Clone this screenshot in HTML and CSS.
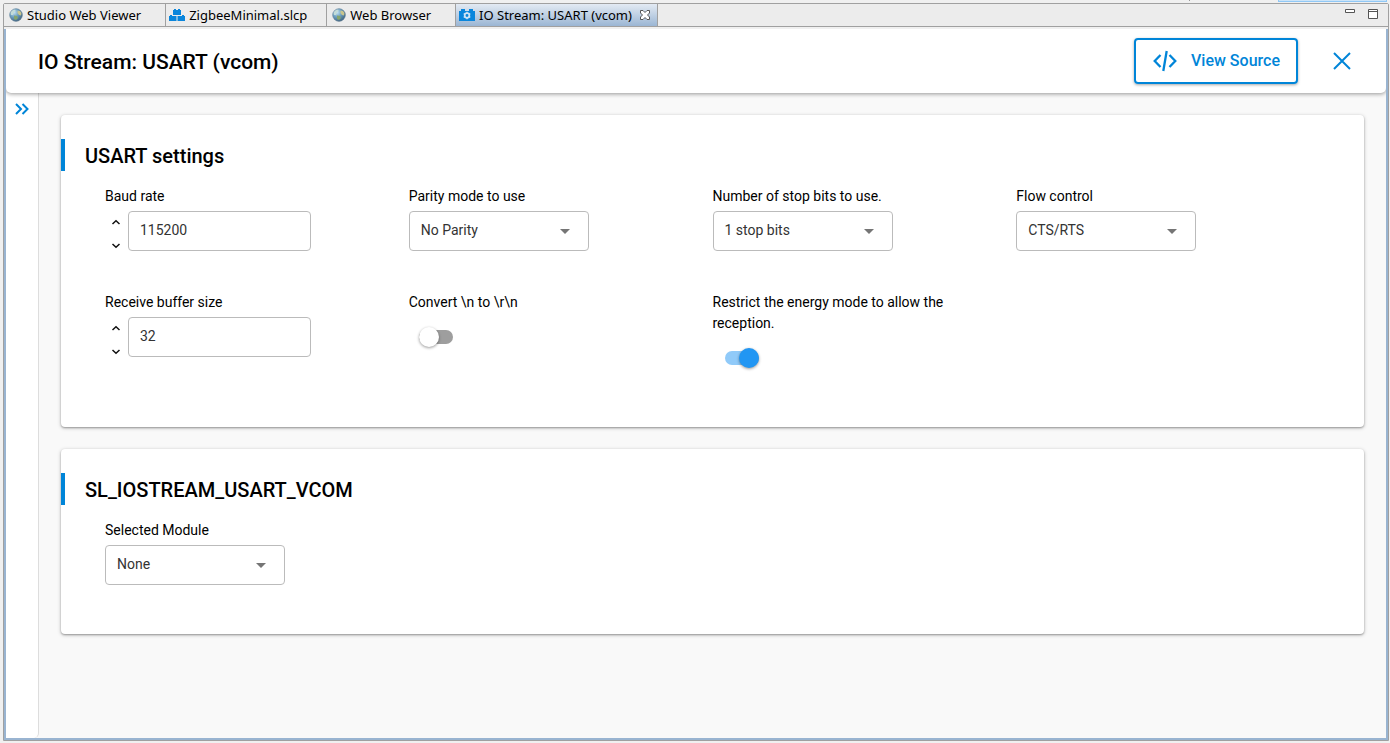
FILE: index.html
```html
<!DOCTYPE html>
<html lang="en">
<head>
<meta charset="utf-8">
<title>IO Stream: USART (vcom)</title>
<link rel="stylesheet" href="styles.css">
</head>
<body>
<svg class="defs" aria-hidden="true">
  <defs>
    <radialGradient id="sea" cx="35%" cy="30%" r="75%">
      <stop offset="0" stop-color="#c4e2f4"/>
      <stop offset="0.5" stop-color="#6a9dbd"/>
      <stop offset="1" stop-color="#3f617c"/>
    </radialGradient>
    <symbol id="globe" viewBox="0 0 14 14">
      <circle cx="7" cy="7" r="6.5" fill="url(#sea)"/>
      <path d="M1.500 5C2 3 4 1.500 6 1.500L6.500 3 5 4.500 4 7 2 7Z" fill="#c3dcd8"/>
      <path d="M8.500 2.500L11 3 12.500 5 12 7.500 10 7 8.500 5Z" fill="#c9c58c"/>
      <path d="M5 7.500L8 8 9 10 7 12 5 11Z" fill="#86a56c"/>
      <circle cx="7" cy="7" r="6.300" fill="none" stroke="#6b8397" stroke-width=".5"/>
    </symbol>
    <symbol id="up" viewBox="0 0 10 6"><path d="M1.500 5L5 1.700 8.500 5" fill="none" stroke="#111" stroke-width="1.500"/></symbol>
    <symbol id="down" viewBox="0 0 10 6"><path d="M1.500 1L5 4.300 8.500 1" fill="none" stroke="#111" stroke-width="1.500"/></symbol>
  </defs>
</svg>
<div class="desktop">
  <div class="toolbar-edge"><span class="edge-tick"></span><span class="edge-button"></span></div>
  <div class="window">
    <nav class="tabs" aria-label="Editors">
      <button class="tab" type="button"><svg class="tab-icon" width="14" height="14"><use href="#globe"/></svg>Studio Web Viewer</button>
      <button class="tab tab-project" type="button"><svg class="tab-icon" width="16" height="14" viewBox="0 0 16 14" fill="#0a86dc"><path d="M4 2h1V1h2v1h2V1h2v1h1v5H4zM0 8h1V7h2v1h4.500v5H0zM8.500 8H13V7h2v1h1v5H8.500z"/></svg>ZigbeeMinimal.slcp</button>
      <button class="tab" type="button"><svg class="tab-icon" width="14" height="14"><use href="#globe"/></svg>Web Browser</button>
      <div class="tab tab-active">
        <svg class="tab-icon" width="16" height="14" viewBox="0 0 16 14"><path d="M0 3h2V1h4v2h4V1h4v2h2v10H0z" fill="#0a86dc"/><circle cx="8" cy="7.500" r="2.300" fill="none" stroke="#cfe4f5" stroke-width="1.700"/><path d="M8 3.700v1.500M8 9.800v1.500M4.700 5.600l1.300.8M10 8.600l1.300.8M4.700 9.400l1.300-.8M10 6.400l1.300-.8" stroke="#cfe4f5" stroke-width="1.300"/></svg>IO Stream: USART (vcom)
        <button class="tab-close" type="button" aria-label="Close tab"><svg width="12" height="12" viewBox="0 0 12 12"><path d="M1.500 1.500h2.500L6 3.500 8 1.500h2.500V4L8.500 6l2 2v2.500H8L6 8.500 4 10.500H1.500V8l2-2-2-2z" fill="#fff" stroke="#555"/></svg></button>
      </div>
      <div class="window-buttons">
        <button type="button" aria-label="Minimize"><svg width="10" height="12" viewBox="0 0 10 12"><path d="M.5 1.500h9v3h-9z" fill="#fff" stroke="#555"/></svg></button>
        <button type="button" aria-label="Maximize"><svg width="10" height="12" viewBox="0 0 10 12"><path d="M.5 1.500h9v9h-9zM.5 3.500h9" fill="#fff" stroke="#555"/></svg></button>
      </div>
    </nav>
    <div class="frame">
      <header class="header">
        <h1>IO Stream: USART (vcom)</h1>
        <button class="source" type="button"><svg width="24" height="22" viewBox="0 0 24 22" fill="none" stroke="#0085d8" stroke-width="2"><path d="M7.500 5L1.700 11l5.800 6M16.500 5L22.300 11l-5.800 6M13.700 1L10.300 21" stroke-width="2.300"/></svg>View Source</button>
        <button class="close" type="button" aria-label="Close"><svg width="18" height="18" viewBox="0 0 18 18" fill="none" stroke="#0085d8" stroke-width="2"><path d="M1 1l16 16M17 1L1 17"/></svg></button>
      </header>
      <div class="body">
        <aside class="rail">
          <button type="button" aria-label="Expand"><svg width="14" height="12" viewBox="0 0 14 12" fill="none" stroke="#0085d8" stroke-width="2"><path d="M1 1l5 5-5 5M7.500 1l5 5-5 5"/></svg></button>
        </aside>
        <main class="main">
          <section class="card">
            <h2>USART settings</h2>
            <div class="fields">
              <div class="field">
                <label for="baud">Baud rate</label>
                <div class="number">
                  <div class="steps"><button type="button" aria-label="Increase baud rate"><svg width="10" height="6"><use href="#up"/></svg></button><button type="button" aria-label="Decrease baud rate"><svg width="10" height="6"><use href="#down"/></svg></button></div>
                  <input id="baud" type="number" value="115200">
                </div>
              </div>
              <div class="field">
                <label for="parity">Parity mode to use</label>
                <div class="select"><select id="parity"><option>No Parity</option></select></div>
              </div>
              <div class="field">
                <label for="stop">Number of stop bits to use.</label>
                <div class="select"><select id="stop"><option>1 stop bits</option></select></div>
              </div>
              <div class="field">
                <label for="flow">Flow control</label>
                <div class="select"><select id="flow"><option>CTS/RTS</option></select></div>
              </div>
              <div class="field">
                <label for="buffer">Receive buffer size</label>
                <div class="number">
                  <div class="steps"><button type="button" aria-label="Increase buffer size"><svg width="10" height="6"><use href="#up"/></svg></button><button type="button" aria-label="Decrease buffer size"><svg width="10" height="6"><use href="#down"/></svg></button></div>
                  <input id="buffer" type="number" value="32">
                </div>
              </div>
              <div class="field">
                <label for="convert">Convert \n to \r\n</label>
                <div class="toggle"><input id="convert" type="checkbox" role="switch"></div>
              </div>
              <div class="field">
                <label for="restrict">Restrict the energy mode to allow the reception.</label>
                <div class="toggle"><input id="restrict" type="checkbox" role="switch" checked></div>
              </div>
            </div>
          </section>
          <section class="card">
            <h2>SL_IOSTREAM_USART_VCOM</h2>
            <div class="fields">
              <div class="field">
                <label for="module">Selected Module</label>
                <div class="select"><select id="module"><option>None</option></select></div>
              </div>
            </div>
          </section>
        </main>
      </div>
    </div>
  </div>
</div>
</body>
</html>
```
FILE: styles.css
```css
* { box-sizing: border-box; }
body {
  margin: 0;
  background: #f0f0f0;
  color: #000;
  font-family: Roboto, "Liberation Sans", sans-serif;
  font-size: 14px;
}
button {
  padding: 0;
  border: 0;
  background: none;
  color: inherit;
  font: inherit;
}
svg { display: block; flex: none; }
.defs { position: absolute; width: 0; height: 0; }
.desktop {
  display: flex;
  flex-direction: column;
  min-height: 100vh;
  padding: 0 1px 2px 3px;
}
.toolbar-edge {
  display: flex;
  justify-content: flex-end;
  gap: 88px;
  height: 3px;
  padding-right: 2px;
}
.edge-tick { width: 1px; height: 1px; background: #999; }
.edge-button {
  width: 109px;
  height: 2px;
  border: 1px solid #90c8f6;
  border-top: 0;
  background: #cce4f7;
}
.window {
  display: flex;
  flex: 1;
  flex-direction: column;
  border: 1px solid #a0a0a0;
  border-radius: 2px 2px 0 0;
}
.tabs {
  display: flex;
  height: 23px;
  border-bottom: 1px solid #a0a0a0;
  background: #ececec;
  font-family: "Noto Sans", sans-serif;
  font-size: 13px;
}
.tab {
  display: flex;
  align-items: center;
  gap: 4px;
  padding: 0 24px 0 5px;
  border-right: 1px solid #a0a0a0;
  white-space: nowrap;
}
.tab-project { padding: 0 19px 0 3px; }
.tab-active {
  padding: 0 6px 0 3px;
  background: linear-gradient(#e3eaf3, #9bb6d4);
}
.tab-close { margin-left: 3px; }
.window-buttons {
  display: flex;
  gap: 13px;
  align-items: center;
  margin-left: auto;
  padding: 0 10px 2px 0;
}
.frame {
  display: flex;
  flex: 1;
  flex-direction: column;
  margin-top: 2px;
  border: solid #99b4d1;
  border-width: 0 2px 2px;
  background: #f9f9f9;
}
.header {
  display: flex;
  z-index: 1;
  align-items: center;
  height: 64px;
  padding: 0 35px 0 32px;
  border-radius: 0 0 5px 5px;
  background: #fff;
  box-shadow: 0 1px 4px rgba(0, 0, 0, .4);
  clip-path: inset(0 0 -8px);
}
h1, h2 {
  margin: 0;
  padding-top: 2px;
  font-size: 20px;
  font-weight: 500;
  line-height: 30px;
}
h1 { flex: 1; font-size: 21px; }
.source {
  display: flex;
  align-items: center;
  justify-content: center;
  gap: 14px;
  width: 164px;
  height: 46px;
  padding: 0 0 1px 1px;
  border: 2px solid #0085d8;
  border-radius: 4px;
  box-shadow: 0 1px 3px rgba(0, 0, 0, .35);
  color: #0085d8;
  font-size: 16px;
  font-weight: 500;
}
.close { margin-left: 35px; }
.body { display: flex; flex: 1; }
.rail {
  width: 33px;
  padding: 9px 0 0 9px;
  border-right: 1px solid #ddd;
  border-radius: 0 0 5px 0;
  background: #fff;
}
.main {
  display: flex;
  flex: 1;
  flex-direction: column;
  gap: 22px;
  padding: 22px;
}
.card {
  padding: 24px 44px 14px 0;
  border-radius: 4px;
  background: #fff;
  box-shadow: 0 1px 4px rgba(0, 0, 0, .2), 0 1px 2px rgba(0, 0, 0, .3);
}
h2 {
  padding-left: 20px;
  border-left: 4px solid #0085d8;
}
.fields {
  display: grid;
  grid-template-columns: repeat(4, 1fr);
  row-gap: 6px;
  margin: 15px 0 0 44px;
}
.field { padding-bottom: 35px; }
label {
  display: block;
  max-width: 240px;
  margin-bottom: 4px;
  line-height: 21px;
}
.number { display: flex; }
.steps {
  display: flex;
  flex-direction: column;
  justify-content: space-between;
  width: 23px;
  padding: 8px 0 2px 6px;
}
.steps button { width: 10px; }
input[type="number"], select {
  height: 40px;
  padding: 0 11px 2px;
  border: 1px solid #bbb;
  border-radius: 4px;
  background: #fff;
  color: #333;
  font: inherit;
  appearance: none;
}
input[type="number"] { width: 183px; appearance: textfield; }
.select { position: relative; width: 180px; }
.select::after {
  position: absolute;
  top: 18px;
  right: 19px;
  border: solid transparent;
  border-width: 5px 5px 0;
  border-top-color: #757575;
  content: "";
  pointer-events: none;
}
select { display: block; width: 100%; }
.toggle {
  display: flex;
  align-items: center;
  height: 40px;
  padding-left: 10px;
}
.toggle input {
  display: flex;
  align-items: center;
  width: 34px;
  height: 14px;
  margin: 0;
  border-radius: 7px;
  background: #9e9e9e;
  appearance: none;
}
.toggle input::before {
  width: 20px;
  height: 20px;
  border-radius: 50%;
  background: #fff;
  box-shadow: 0 1px 3px rgba(0, 0, 0, .4);
  content: "";
}
.toggle input:checked {
  justify-content: flex-end;
  margin-left: 2px;
  background: #90caf9;
}
.toggle input:checked::before { background: #2196f3; }
```
